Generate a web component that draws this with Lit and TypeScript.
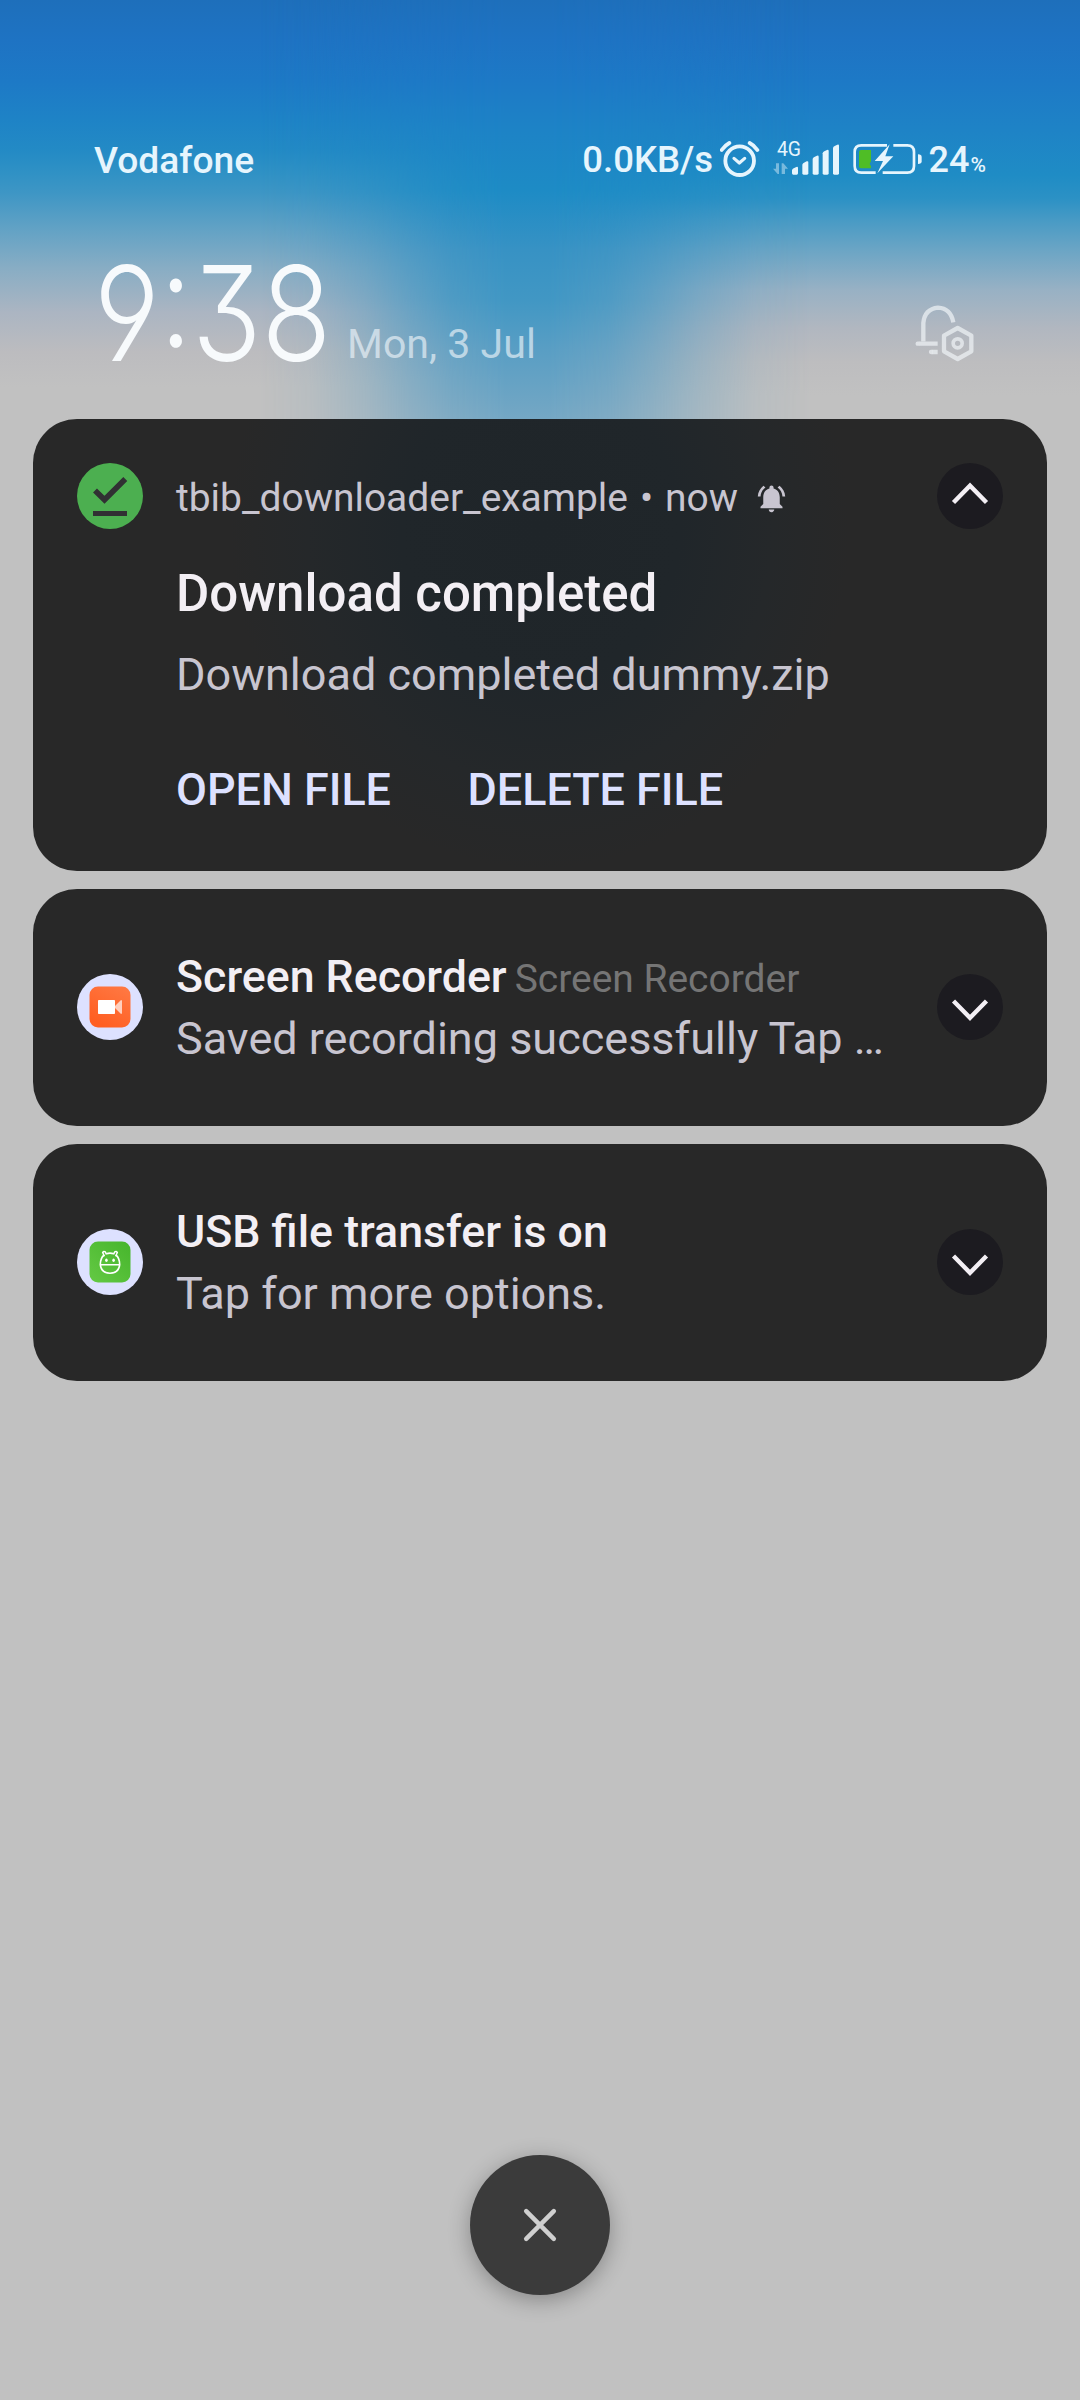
import { LitElement, html, css, svg, type TemplateResult } from "lit";
import { customElement, property } from "lit/decorators.js";

const alarmIcon = html`<svg width="40" height="40" viewBox="477 60 120 120" fill="none" stroke="currentColor">
  <circle cx="536" cy="122" r="43" stroke-width="11.500" />
  <path d="M482 90 Q492 76 505 69M566 69 Q580 76 589 90" stroke-width="11.500" stroke-linecap="round" />
  <path d="M519 115l16 14 16-14" stroke-width="9.500" stroke-linecap="round" stroke-linejoin="round" />
</svg>`;

const signalBars: [number, number][] = [[693, 142], [724, 125], [755, 108], [785, 91], [816, 75]];

const signalIcon = html`<svg class="bars" width="68" height="40" viewBox="633 60 204 120" fill="currentColor">
  <text class="net" x="648" y="108">4G</text>
  <g opacity=".45">
    <path d="M645 130h9v32h-4l-14-16h9zM662 162v-32h5l14 16h-9v16z" />
  </g>
  ${signalBars.map(([x, top]) => svg`<path d=${`M${x} ${top + 9}q1-4 5-6l8-4q5-2 5 3v${158 - top}q0 4-4 4h-10q-4 0-4-4z`} />`)}
</svg>`;

const batteryIcon = html`<svg width="71" height="40" viewBox="873 60 213 120" fill="none">
  <path d="M978 76h-77q-20 0-20 20v42q0 20 20 20h43M997 76h42q20 0 20 20v42q0 20-20 20h-74" stroke="currentColor" stroke-width="8" />
  <path d="M900 90h30v34l-4 8 4 6v7h-30q-6 0-6-6v-43q0-6 6-6z" fill="#4fbd26" />
  <path d="M986 73l-45 50h25l-17 37 48-51h-24z" fill="currentColor" />
  <path d="M1071 103q11 0 11 8v13q0 8-11 8z" fill="currentColor" />
</svg>`;

const bellSettingsIcon = html`<svg width="60" height="60" viewBox="104 70 180 180" fill="none" stroke="currentColor">
  <path d="M129 185v-55q4-42 44-46 38 2 46 44M117 192h55M157 217h15" stroke-width="13" />
  <path d="M118 198.500v-13h-6a6.500 6.500 0 0 0 0 13zM158 223.500v-13h-6a6.500 6.500 0 0 0 0 13z" fill="currentColor" stroke="none" />
  <path d="M232 145l41 23v47l-41 23-41-23v-47z" stroke-width="13" stroke-linejoin="round" />
  <circle cx="232" cy="191" r="13.500" stroke-width="11" />
</svg>`;

const ringIcon = html`<svg class="ring" width="33" height="33" viewBox="0 0 24 24" fill="currentColor">
  <path d="M7.580 4.080L6.150 2.650C3.750 4.480 2.170 7.300 2.030 10.500h2c.15-2.650 1.510-4.970 3.550-6.420zm12.390 6.420h2c-.15-3.200-1.730-6.020-4.120-7.850l-1.420 1.430c2.020 1.450 3.390 3.770 3.540 6.420zM18 11c0-3.070-1.640-5.640-4.500-6.320V4c0-.83-.67-1.500-1.500-1.500s-1.500.67-1.500 1.500v.68C7.630 5.360 6 7.920 6 11v5l-2 2v1h16v-1l-2-2v-5zm-6 11c.14 0 .27-.01.4-.04.65-.14 1.180-.58 1.440-1.180.1-.24.15-.5.15-.78h-4c.01 1.100.9 2 2.010 2z" />
</svg>`;

const downloadIcon = html`<svg width="66" height="66" viewBox="0 0 66 66">
  <circle cx="33" cy="33" r="33" fill="#4caf50" />
  <path d="M18 27.500l9.500 9.300L48.300 16" fill="none" stroke="#313033" stroke-width="5.600" />
  <path d="M16 48h34v5H16z" fill="#313033" />
</svg>`;

const recorderIcon = html`<svg width="66" height="66" viewBox="0 0 66 66">
  <defs><linearGradient id="g" x1="1" y1="0" x2=".4" y2="1"><stop offset="0" stop-color="#ff7a45" /><stop offset="1" stop-color="#ff5f22" /></linearGradient></defs>
  <circle cx="33" cy="33" r="33" fill="#dde1ff" />
  <rect x="12.500" y="12.500" width="41" height="41" rx="8.500" fill="url(#g)" />
  <rect x="21" y="26" width="17" height="14" rx=".8" fill="#fff" />
  <path d="M38 32l6-6q1 0 1 1v12q0 1-1 1l-6-6z" fill="#ffcfbd" />
</svg>`;

const usbIcon = html`<svg width="66" height="66" viewBox="0 0 66 66">
  <defs><linearGradient id="g" x1="1" y1="0" x2="0" y2="1"><stop offset="0" stop-color="#46b52c" /><stop offset="1" stop-color="#64c944" /></linearGradient></defs>
  <circle cx="33" cy="33" r="33" fill="#dde1ff" />
  <rect x="12.500" y="12.500" width="41" height="41" rx="8.500" fill="url(#g)" />
  <g fill="none" stroke="#fff" stroke-width="1.600">
    <path d="M29.300 24.800q3.700-1.300 7.400 0M27.200 26q-3.900 3-3.900 9.700 1 8.500 9.700 8.500t9.700-8.500q0-6.700-3.900-9.700M23.500 35.800h19" />
    <path d="M27.400 27.200l-1.700-3.700q1-1.700 2.600-.6l1.200 2.500M38.600 27.200l1.700-3.700q-1-1.700-2.600-.6l-1.200 2.500" stroke-width="1.500" />
  </g>
  <ellipse cx="29.400" cy="31.300" rx="1.300" ry="1.700" fill="#fff" /><ellipse cx="36.600" cy="31.300" rx="1.300" ry="1.700" fill="#fff" />
</svg>`;

@customElement("expand-button")
export class ExpandButton extends LitElement {
  @property({ type: Boolean }) open = false;

  static styles = css`
    :host { display: block; width: 66px; height: 66px; border-radius: 50%; background: #1c1b20; flex: none; }
    svg { display: block; }
  `;

  render() {
    return html`<svg width="66" height="66" viewBox="0 0 66 66" fill="none" stroke="#f3eff4" stroke-width="4.400">
      <path d=${this.open ? "M16.500 39.500L33 22.700 49.500 39.500" : "M16.500 27L33 43.800 49.500 27"} />
    </svg>`;
  }
}

@customElement("compact-notification")
export class CompactNotification extends LitElement {
  @property() heading = "";
  @property() app = "";
  @property() message = "";
  @property({ attribute: false }) icon?: TemplateResult;

  static styles = css`
    :host { display: flex; align-items: center; box-sizing: border-box; height: 237px; padding: 0 44px 1px; border-radius: 44px; background: #282828; }
    .icon { flex: none; width: 66px; height: 66px; margin-right: 33px; }
    .icon svg { display: block; }
    .texts { flex: 1; min-width: 0; padding-top: 2px; line-height: 62px; white-space: nowrap; }
    .top { display: flex; align-items: baseline; gap: 8px; height: 62px; }
    .heading { font-size: 44.700px; font-weight: 500; color: #f3eff4; }
    .app { font-size: 38.950px; color: #757575; }
    .message { width: 718px; overflow: hidden; text-overflow: ellipsis; font-size: 45px; color: #c8c5d0; }
  `;

  render() {
    return html`
      <div class="icon">${this.icon}</div>
      <div class="texts">
        <div class="top"><span class="heading">${this.heading}</span>${this.app ? html`<span class="app">${this.app}</span>` : ""}</div>
        <div class="message">${this.message}</div>
      </div>
      <expand-button></expand-button>
    `;
  }
}

@customElement("app-root")
export class AppRoot extends LitElement {
  static styles = css`
    :host { display: block; font-family: Roboto, "Liberation Sans", sans-serif; }
    .shade {
      position: relative; isolation: isolate; overflow: hidden; box-sizing: border-box; width: 1080px; height: 2400px;
      display: flex; flex-direction: column;
      background:
        linear-gradient(#1e6fbb 0, #1e73c3 40px, #1d79c6 80px, #1e83c6 120px, #238ac5 150px, #2f91c5 172px, #3e96c5 193px, #62a2c5 229px, #88adc4 268px, #abb5c2 312px, #bcbcbf 352px, #c1c1c1 387px) 0 0 / 540px 100% no-repeat,
        linear-gradient(#1e6fbb 0, #1e73c3 40px, #1d79c6 80px, #1e83c6 130px, #1f8cc5 175px, #2b91c5 198px, #4a9bc5 222px, #6ba5c5 250px, #98b1c4 290px, #b1b7c0 328px, #bdbdbf 362px, #c1c1c1 395px) 540px 0 / 540px 100% no-repeat;
    }
    .glow {
      position: absolute; z-index: -1; inset: 0 0 auto 0; height: 860px;
      background: linear-gradient(#1e6fbb 0, #1e73c3 40px, #1d79c6 80px, #1d83c6 130px, #1d8bc5 190px, #3792c4 250px, #4197c4 300px, #599ec4 350px, #74a7c4 418px, #74a7c4);
      mask-image: linear-gradient(90deg, transparent 260px, rgba(0,0,0,.1) 310px, rgba(0,0,0,.36) 365px, rgba(0,0,0,.64) 410px, rgba(0,0,0,.86) 452px, #000 505px, #000 550px, rgba(0,0,0,.86) 608px, rgba(0,0,0,.64) 652px, rgba(0,0,0,.36) 700px, rgba(0,0,0,.1) 755px, transparent 810px);
    }
    .status { display: flex; align-items: center; height: 48px; margin-top: 136px; padding: 0 94px; color: #e6f5fd; font-size: 36px; font-weight: 500; line-height: 48px; }
    .carrier { flex: 1; font-size: 37.200px; }
    .status svg { display: block; }
    .bars { overflow: visible; }
    .net { font-size: 58px; font-weight: 400; }
    .rate { font-size: 36.500px; margin-right: 7px; }
    .signal { margin: 0 12.500px 0 11.500px; }
    .battery { margin-right: 5.500px; }
    .pct { font-size: 21px; padding: 10px 0 0 1px; }
    .clockrow { display: flex; align-items: flex-end; height: 184px; padding: 0 105px 0 94px; }
    .time {
      width: 253px; height: 140px; margin-bottom: -15px; line-height: 140px; font-family: Inter, Lato, sans-serif; font-size: 132px; font-weight: 300; color: #f7fafc;
      font-feature-settings: "cv03", "cv04", "cv09"; transform: scaleX(.866); transform-origin: 0 0; white-space: nowrap;
    }
    .date { flex: 1; font-size: 41.100px; line-height: 52px; margin-bottom: -2px; color: rgba(236,243,248,.66); }
    .bell { color: rgba(240,244,247,.7); margin-bottom: 5px; }
    .bell svg { display: block; }
    .list { display: flex; flex-direction: column; gap: 18px; margin: 51px 33px 0; }
    .card {
      box-sizing: border-box; height: 452px; padding: 44px; border-radius: 44px;
      display: grid; grid-template-columns: 66px 1fr 66px; column-gap: 33px; align-content: start;
      background: radial-gradient(ellipse 310px 340px at 507px 110px, #1f2529 0, #20262a 45%, #25282a 75%, #282828 100%) #282828;
    }
    .card svg { display: block; }
    .meta { display: flex; align-items: center; padding-top: 3px; font-size: 38.950px; color: #c8c5d0; white-space: nowrap; }
    .dot { margin: 0 12px; }
    .ring { margin: 2px 0 0 17px; }
    .body { grid-column: 2 / 4; }
    .title { margin-top: 35px; font-size: 51px; line-height: 60px; font-weight: 500; color: #f3eff4; }
    .text { margin-top: 25px; font-size: 45px; line-height: 52px; color: #c8c5d0; }
    .actions { display: flex; gap: 76.500px; margin-top: 63px; font-size: 44.900px; line-height: 52px; font-weight: 500; color: #dde1ff; }
    .clear {
      display: grid; place-items: center; align-self: center; width: 140px; height: 140px; margin: auto 0 105px;
      border-radius: 50%; background: #3b3b3b; box-shadow: 0 5px 22px rgba(0,0,0,.3);
    }
  `;

  render() {
    return html`
      <div class="shade">
        <div class="glow"></div>
        <div class="status">
          <span class="carrier">Vodafone</span>
          <span class="rate">0.0KB/s</span>
          <span>${alarmIcon}</span>
          <span class="signal">${signalIcon}</span>
          <span class="battery">${batteryIcon}</span>
          <span>24</span><span class="pct">%</span>
        </div>
        <div class="clockrow">
          <div class="time">9:38</div>
          <div class="date">Mon, 3 Jul</div>
          <div class="bell">${bellSettingsIcon}</div>
        </div>
        <div class="list">
          <div class="card">
            ${downloadIcon}
            <div class="meta"><span>tbib_downloader_example</span><span class="dot">•</span><span>now</span>${ringIcon}</div>
            <expand-button open></expand-button>
            <div class="body">
              <div class="title">Download completed</div>
              <div class="text">Download completed dummy.zip</div>
              <div class="actions"><span>OPEN FILE</span><span>DELETE FILE</span></div>
            </div>
          </div>
          <compact-notification
            .icon=${recorderIcon}
            heading="Screen Recorder"
            app="Screen Recorder"
            message="Saved recording successfully Tap …"
          ></compact-notification>
          <compact-notification
            .icon=${usbIcon}
            heading="USB file transfer is on"
            message="Tap for more options."
          ></compact-notification>
        </div>
        <div class="clear">
          <svg width="40" height="40" viewBox="0 0 40 40" stroke="#cfcfcf" stroke-width="4.500" stroke-linecap="round">
            <path d="M6.200 6.200l27.600 27.600M33.800 6.200L6.200 33.800" />
          </svg>
        </div>
      </div>
    `;
  }
}
